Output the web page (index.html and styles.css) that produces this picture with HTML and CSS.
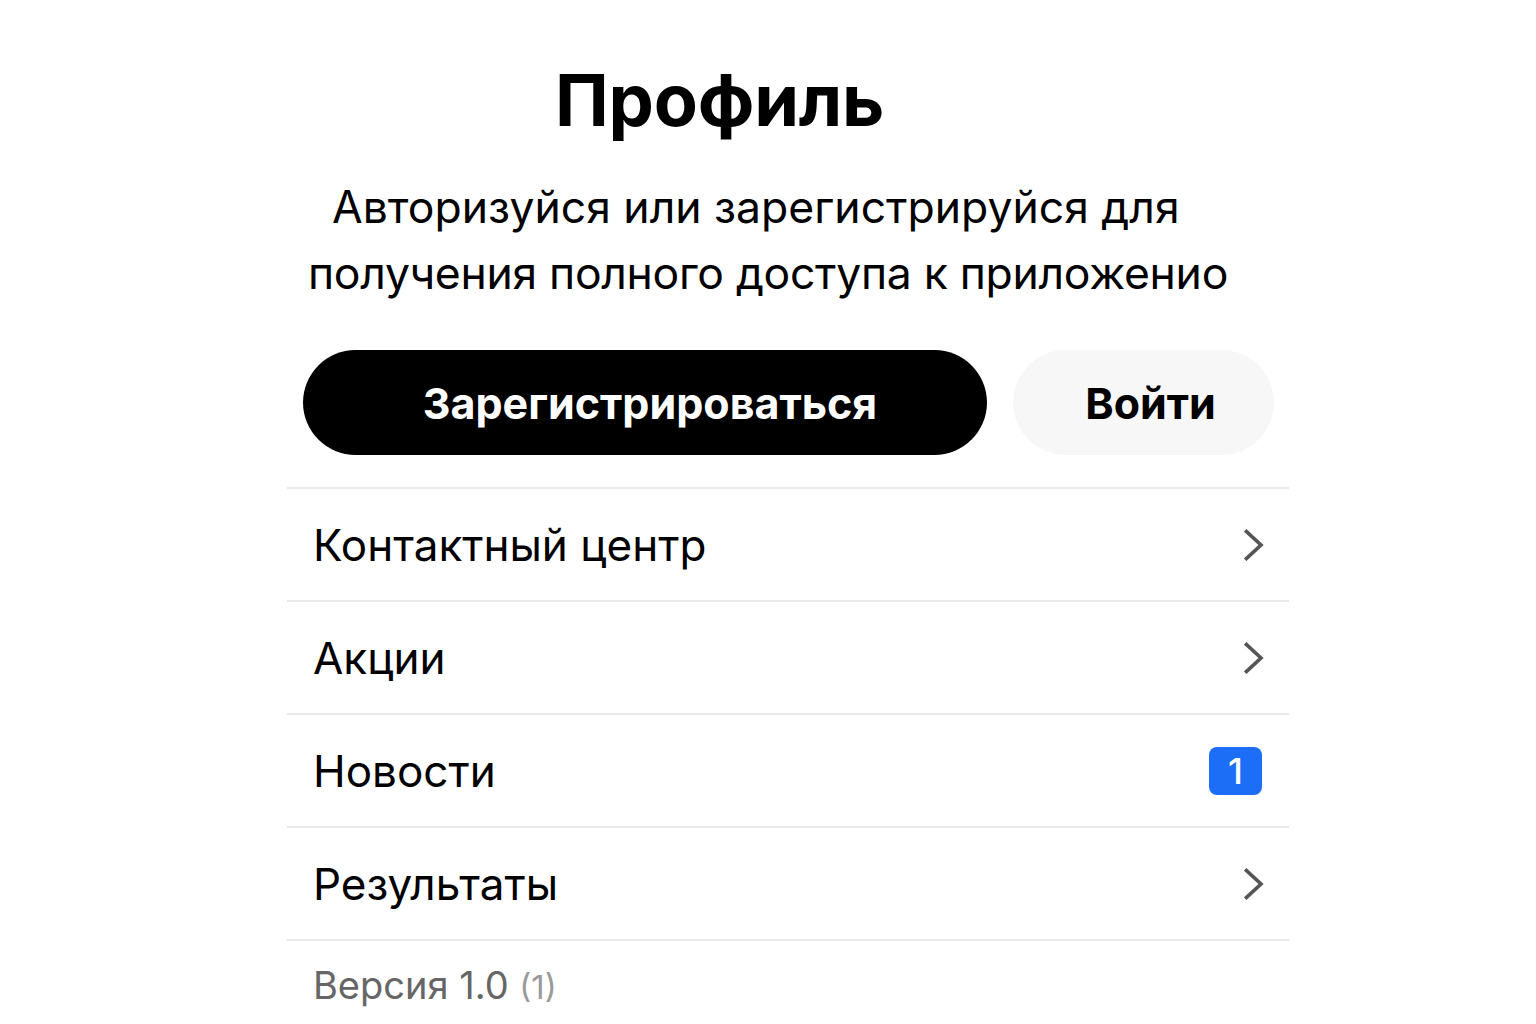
FILE: index.html
```html
<!DOCTYPE html>
<html lang="ru">
<head>
<meta charset="utf-8">
<title>Профиль</title>
<link rel="stylesheet" href="styles.css">
</head>
<body>
<main class="page">
  <h1 class="title">Профиль</h1>
  <p class="subtitle">
    <span class="sub-line sub-line-1">Авторизуйся или зарегистрируйся для</span>
    <span class="sub-line sub-line-2">получения полного доступа к приложенио</span>
  </p>
  <div class="actions">
    <button class="btn btn-primary">Зарегистрироваться</button>
    <button class="btn btn-secondary">Войти</button>
  </div>
  <ul class="menu">
    <li class="menu-item">
      <span class="menu-label">Контактный центр</span>
      <svg class="chevron" viewBox="0 0 20 32" width="20" height="32"><path d="M2.5 2.5 L17 16 L2.5 29.5" fill="none" stroke="#555" stroke-width="3.6" stroke-linecap="square"/></svg>
    </li>
    <li class="menu-item">
      <span class="menu-label">Акции</span>
      <svg class="chevron" viewBox="0 0 20 32" width="20" height="32"><path d="M2.5 2.5 L17 16 L2.5 29.5" fill="none" stroke="#555" stroke-width="3.6" stroke-linecap="square"/></svg>
    </li>
    <li class="menu-item">
      <span class="menu-label">Новости</span>
      <span class="badge">1</span>
    </li>
    <li class="menu-item">
      <span class="menu-label">Результаты</span>
      <svg class="chevron" viewBox="0 0 20 32" width="20" height="32"><path d="M2.5 2.5 L17 16 L2.5 29.5" fill="none" stroke="#555" stroke-width="3.6" stroke-linecap="square"/></svg>
    </li>
  </ul>
  <div class="version">Версия 1.0 <span class="build">(1)</span></div>
</main>
</body>
</html>
```

FILE: styles.css
```css
* { box-sizing: border-box; }
html, body { margin: 0; padding: 0; background: #fff; }
body {
  font-family: Inter, "Noto Sans", "Liberation Sans", sans-serif;
  color: #000;
  width: 1536px;
  height: 1024px;
  overflow: hidden;
}
.page {
  width: 1002px;
  margin-left: 287px;
  padding-top: 58px;
}
.title {
  margin: 0;
  padding-left: 268px;
  font-size: 72px;
  font-weight: 700;
  line-height: 84px;
  letter-spacing: -0.2px;
}
.subtitle {
  margin: 32px 0 0;
  font-size: 44.5px;
  line-height: 66px;
  font-weight: 400;
}
.sub-line { display: block; white-space: nowrap; }
.sub-line-1 { padding-left: 45px; }
.sub-line-2 { padding-left: 21px; letter-spacing: -0.3px; }
.actions {
  display: flex;
  gap: 26px;
  margin-top: 44px;
  padding-left: 16px;
}
.btn {
  height: 105px;
  border: none;
  border-radius: 53px;
  font-family: inherit;
  font-size: 43px;
  font-weight: 700;
  cursor: pointer;
}
.btn-primary {
  width: 684px;
  padding: 0 0 0 10px;
  background: #000;
  color: #fff;
}
.btn-secondary {
  width: 261px;
  padding: 0 0 0 14px;
  background: #f7f7f7;
  color: #000;
}
.menu {
  list-style: none;
  margin: 32px 0 0;
  padding: 0;
  border-top: 2px solid #e9e9e9;
}
.menu-item {
  display: flex;
  align-items: center;
  justify-content: space-between;
  height: 113px;
  padding: 0 25px 0 26px;
  border-bottom: 2px solid #e9e9e9;
}
.menu-label {
  font-size: 44px;
  line-height: 1;
}
.chevron { display: block; }
.badge {
  display: flex;
  align-items: center;
  justify-content: center;
  width: 53px;
  height: 48px;
  margin-right: 2px;
  border-radius: 8px;
  background: #1c6ef6;
  color: #fff;
  font-size: 36px;
  font-weight: 500;
}
.version {
  padding: 21px 0 0 26px;
  font-size: 38px;
  color: #666;
}
.build {
  font-size: 33px;
  color: #9a9a9a;
}
```
